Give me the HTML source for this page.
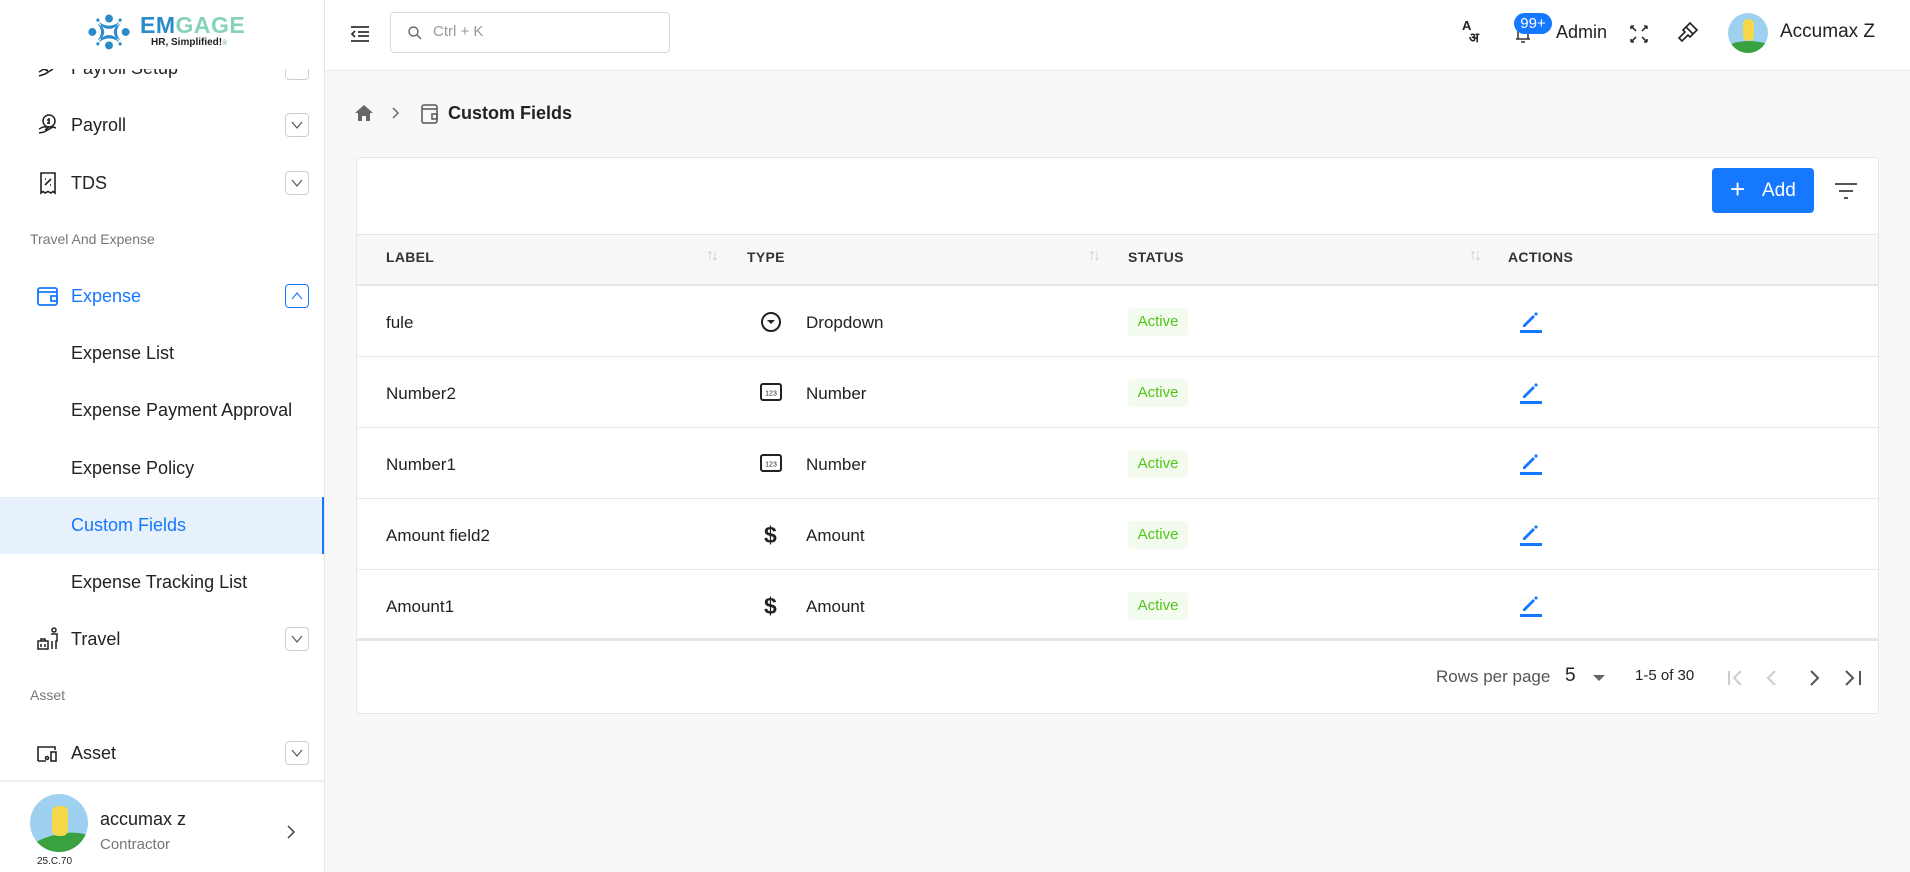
<!DOCTYPE html>
<html><head><meta charset="utf-8"><style>
*{box-sizing:border-box;margin:0;padding:0}
body{width:1910px;height:872px;overflow:hidden;font-family:"Liberation Sans",sans-serif;background:#f8f8f8;color:#222;position:relative}
.abs{position:absolute}
#side{left:0;top:0;width:325px;height:872px;background:#fff;border-right:1px solid #e6e6e6;overflow:hidden}
#hdr{left:325px;top:0;width:1585px;height:71px;background:#fff;border-bottom:1px solid #eaeaea}
.mi{position:absolute;left:0;width:325px;height:48px;display:flex;align-items:center;font-size:18px;color:#222}
.mi .ic{position:absolute;left:36px;top:12px;width:24px;height:24px}
.mi .t{position:absolute;left:71px}
.chev{position:absolute;left:285px;top:12px;width:24px;height:24px;border:1px solid #cfcfcf;border-radius:4px;display:flex;align-items:center;justify-content:center}
.sec{position:absolute;left:30px;font-size:14px;color:#777}
.card{left:356px;top:157px;width:1523px;height:557px;background:#fff;border:1px solid #e4e7ec;border-radius:4px}
.th{position:absolute;top:249px;font-size:14px;font-weight:bold;color:#333;letter-spacing:.3px}
.row{position:absolute;left:357px;width:1521px;height:71px;border-bottom:1px solid #e8e8e8;font-size:17px;color:#222}
.row span{position:absolute;top:27px}
.badge{position:absolute;left:771px;top:22px;width:60px;height:28px;background:#f3fbef;border-radius:4px;color:#52c41a;font-size:15px;text-align:center;line-height:28px}
</style></head><body>
<div id="side" class="abs">
  <div class="mi" style="top:44px"><svg class="ic" viewBox="0 0 24 24" fill="none" stroke="#222" stroke-width="1.6"><path d="M3 16l5-3 4 2M3 20l6-2 8-5M14 4l6 6M17 7l-6 6"/></svg><span class="t" style="top:14px">Payroll Setup</span><div class="chev"></div></div>
  <div class="abs" style="left:0;top:0;width:324px;height:69px;background:#fff"></div>
  <svg class="abs" style="left:86px;top:10px" width="46" height="44" viewBox="0 0 58 46">
    <g fill="#2a8bc9"><circle cx="29" cy="6" r="5"/><circle cx="29" cy="40" r="5"/><circle cx="8" cy="23" r="5"/><circle cx="50" cy="23" r="5"/>
    <path d="M16 10 Q29 20 42 10 L38 16 Q29 22 20 16Z"/><path d="M16 36 Q29 26 42 36 L38 30 Q29 24 20 30Z"/>
    <path d="M14 12 Q24 23 14 34 L20 30 Q26 23 20 16Z"/><path d="M44 12 Q34 23 44 34 L38 30 Q32 23 38 16Z"/>
    <circle cx="15" cy="8" r="2"/><circle cx="43" cy="8" r="2"/><circle cx="15" cy="38" r="2"/><circle cx="43" cy="38" r="2"/></g>
  </svg>
  <div class="abs" style="left:140px;top:13px;font-size:23px;font-weight:bold;letter-spacing:0.5px;line-height:24px"><span style="color:#2a8bc9">EM</span><span style="color:#86d3b9">GAGE</span></div>
  <div class="abs" style="left:151px;top:37px;font-size:10px;font-weight:bold;color:#222">HR, Simplified!<span style="color:#8bc;font-size:7px">®</span></div>

  <div class="mi" style="top:101px"><svg class="ic" viewBox="0 0 24 24" fill="none" stroke="#222" stroke-width="1.5"><circle cx="13" cy="8" r="6"/><path d="M13 5v6M11 7h3M11 10h3M3 16l4-2h6l-4 3M3 20l5-1 9-5 3 1"/></svg><span class="t">Payroll</span><div class="chev"><svg width="12" height="8" viewBox="0 0 12 8"><path d="M1 1l5 6 5-6" fill="none" stroke="#555" stroke-width="1.2"/></svg></div></div>
  <div class="mi" style="top:159px"><svg class="ic" viewBox="0 0 24 24" fill="none" stroke="#222" stroke-width="1.6"><path d="M5 2h14v20l-2-1.5-2 1.5-3-1.5-3 1.5-2-1.5-2 1.5z"/><path d="M9 14l6-6M9 8h1M14 14h1"/></svg><span class="t">TDS</span><div class="chev"><svg width="12" height="8" viewBox="0 0 12 8"><path d="M1 1l5 6 5-6" fill="none" stroke="#555" stroke-width="1.2"/></svg></div></div>
  <div class="sec" style="top:231px">Travel And Expense</div>
  <div class="mi" style="top:272px;color:#1677ff"><svg class="ic" viewBox="0 0 24 24" fill="none" stroke="#1677ff" stroke-width="1.8"><rect x="2" y="4" width="19" height="17" rx="2"/><path d="M2 8h19M15 12h6v5h-6z"/></svg><span class="t">Expense</span><div class="chev" style="border-color:#1677ff"><svg width="12" height="8" viewBox="0 0 12 8"><path d="M1 7l5-6 5 6" fill="none" stroke="#1677ff" stroke-width="1.2"/></svg></div></div>
  <div class="mi" style="top:329px"><span class="t">Expense List</span></div>
  <div class="mi" style="top:386px"><span class="t">Expense Payment Approval</span></div>
  <div class="mi" style="top:444px"><span class="t">Expense Policy</span></div>
  <div class="mi" style="top:497px;height:57px;background:#e6f1fc;color:#1677ff;border-right:3px solid #1677ff"><span class="t">Custom Fields</span></div>
  <div class="mi" style="top:558px"><span class="t">Expense Tracking List</span></div>
  <div class="mi" style="top:615px"><svg class="ic" viewBox="0 0 24 24" fill="none" stroke="#222" stroke-width="1.5"><circle cx="18" cy="3" r="2"/><path d="M15 7h6v7h-1v8M16 14v8M2 14h10v8H2zM5 14v-2h4v2M5 17v3M9 17v3"/></svg><span class="t">Travel</span><div class="chev"><svg width="12" height="8" viewBox="0 0 12 8"><path d="M1 1l5 6 5-6" fill="none" stroke="#555" stroke-width="1.2"/></svg></div></div>
  <div class="sec" style="top:687px">Asset</div>
  <div class="mi" style="top:729px"><svg class="ic" viewBox="0 0 24 24" fill="none" stroke="#222" stroke-width="1.6"><path d="M2 20V6h17v3M2 20h8"/><rect x="15" y="11" width="5" height="9"/><circle cx="11" cy="17" r="1.5"/></svg><span class="t">Asset</span><div class="chev"><svg width="12" height="8" viewBox="0 0 12 8"><path d="M1 1l5 6 5-6" fill="none" stroke="#555" stroke-width="1.2"/></svg></div></div>
  <div class="abs" style="left:0;top:780px;width:325px;height:2px;background:#eee"></div>
  <div class="abs" style="left:30px;top:794px;width:58px;height:58px;border-radius:50%;background:#9ed0f0;overflow:hidden"><div style="position:absolute;left:-5px;top:40px;width:70px;height:30px;background:#3aa140;border-radius:50% 50% 0 0;transform:rotate(-12deg)"></div><div style="position:absolute;left:22px;top:12px;width:16px;height:30px;background:#f5d74a;border-radius:6px"></div></div>
  <div class="abs" style="left:37px;top:856px;font-size:10px;color:#222">25.C.70</div>
  <div class="abs" style="left:100px;top:809px;font-size:18px;color:#222">accumax z</div>
  <div class="abs" style="left:100px;top:836px;font-size:15px;color:#777">Contractor</div>
  <svg class="abs" style="left:286px;top:824px" width="10" height="16" viewBox="0 0 10 16"><path d="M2 2l6 6-6 6" fill="none" stroke="#444" stroke-width="1.5"/></svg>
</div>

<div id="hdr" class="abs">
  <svg class="abs" style="left:25px;top:25px" width="20" height="18" viewBox="0 0 20 18" fill="none" stroke="#333" stroke-width="1.8"><path d="M1 2h18M8 7h11M8 11h11M1 16h18M5 6l-3 3 3 3"/></svg>
  <div class="abs" style="left:65px;top:12px;width:280px;height:41px;border:1px solid #d9d9d9;border-radius:4px"></div>
  <svg class="abs" style="left:83px;top:26px" width="14" height="14" viewBox="0 0 14 14" fill="none" stroke="#666" stroke-width="1.4"><circle cx="5.5" cy="5.5" r="4.5"/><path d="M9 9l4 4"/></svg>
  <div class="abs" style="left:108px;top:23px;font-size:15px;color:#999">Ctrl + K</div>
  <div class="abs" style="left:1137px;top:20px;font-size:13px;font-weight:bold;color:#222;line-height:12px">A<br><span style="margin-left:7px">अ</span></div>
  <svg class="abs" style="left:1190px;top:24px" width="16" height="20" viewBox="0 0 16 20" fill="none" stroke="#333" stroke-width="1.5"><path d="M3 15V8a5 5 0 0110 0v7zM1 15h14M6 18h4"/></svg>
  <div class="abs" style="left:1189px;top:13px;width:38px;height:21px;background:#1677ff;border-radius:11px;color:#fff;font-size:15px;text-align:center;line-height:21px">99+</div>
  <div class="abs" style="left:1231px;top:22px;font-size:18px;color:#222">Admin</div>
  <svg class="abs" style="left:1305px;top:25px" width="18" height="18" viewBox="0 0 18 18" fill="none" stroke="#333" stroke-width="1.6"><path d="M1 1l5 5M1 1v3M1 1h3M17 1l-5 5M17 1v3M17 1h-3M1 17l5-5M1 17v-3M1 17h3M17 17l-5-5M17 17v-3M17 17h-3"/></svg>
  <svg class="abs" style="left:1352px;top:21px" width="22" height="22" viewBox="0 0 22 22" fill="none" stroke="#222" stroke-width="1.6"><path d="M13 2l7 7-4 4-7-7zM9 6l-3 3 2 2-6 6 3 3 6-6 2 2 3-3"/></svg>
  <div class="abs" style="left:1403px;top:13px;width:40px;height:40px;border-radius:50%;background:#9ed0f0;overflow:hidden"><div style="position:absolute;left:-4px;top:28px;width:50px;height:20px;background:#3aa140;border-radius:50% 50% 0 0"></div><div style="position:absolute;left:15px;top:6px;width:11px;height:22px;background:#f5d74a;border-radius:5px"></div></div>
  <div class="abs" style="left:1455px;top:21px;font-size:19px;color:#222">Accumax Z</div>
</div>

<svg class="abs" style="left:354px;top:104px" width="20" height="18" viewBox="0 0 20 18"><path d="M10 1L1 9h3v8h4v-5h4v5h4V9h3z" fill="#666"/></svg>
<svg class="abs" style="left:392px;top:107px" width="8" height="12" viewBox="0 0 8 12"><path d="M1 1l5 5-5 5" fill="none" stroke="#666" stroke-width="1.5"/></svg>
<svg class="abs" style="left:420px;top:103px" width="20" height="22" viewBox="0 0 20 22" fill="none" stroke="#555" stroke-width="1.5"><rect x="2" y="2" width="15" height="18" rx="2"/><path d="M2 6h15M12 11h5v5h-5z"/></svg>
<div class="abs" style="left:448px;top:103px;font-size:18px;font-weight:bold;color:#222">Custom Fields</div>

<div class="card abs"></div>
<div class="abs" style="left:1712px;top:168px;width:102px;height:45px;background:#1677ff;border-radius:4px;color:#fff;font-size:19px;line-height:45px"><span style="position:absolute;left:18px;top:-1px;font-size:26px;font-weight:300">+</span><span style="position:absolute;left:50px">Add</span></div>
<svg class="abs" style="left:1835px;top:183px" width="22" height="16" viewBox="0 0 22 16" fill="none" stroke="#555" stroke-width="2"><path d="M0 1h22M4 8h14M9 15h4"/></svg>

<div class="abs" style="left:357px;top:234px;width:1521px;height:52px;background:#f8f8f8;border-top:1px solid #e8e8e8;border-bottom:2px solid #e4e4e4"></div>
<div class="th" style="left:386px">LABEL</div>
<div class="th" style="left:747px">TYPE</div>
<div class="th" style="left:1128px">STATUS</div>
<div class="th" style="left:1508px">ACTIONS</div>
<div class="abs" style="left:706px;top:247px;color:#ccc;font-size:16px;letter-spacing:-3px">↑↓</div>
<div class="abs" style="left:1088px;top:247px;color:#ccc;font-size:16px;letter-spacing:-3px">↑↓</div>
<div class="abs" style="left:1469px;top:247px;color:#ccc;font-size:16px;letter-spacing:-3px">↑↓</div>

<div class="row" style="top:286px"><span style="left:29px">fule</span>
<svg style="position:absolute;left:403px;top:25px" width="22" height="22" viewBox="0 0 22 22"><circle cx="11" cy="11" r="9" fill="none" stroke="#222" stroke-width="2"/><path d="M7 9h8l-4 4z" fill="#222"/></svg><span style="left:449px">Dropdown</span>
<div class="badge">Active</div>
<svg style="position:absolute;left:1162px;top:24px" width="24" height="24" viewBox="0 0 24 24"><path d="M4 15l10-10 2 2-10 10H4z" fill="#1677ff"/><path d="M15 4l2-2 2 2-2 2z" fill="#1677ff"/><rect x="1" y="20" width="22" height="3" fill="#1677ff"/></svg></div>
<div class="row" style="top:357px"><span style="left:29px">Number2</span>
<svg style="position:absolute;left:403px;top:26px" width="22" height="18" viewBox="0 0 22 18"><rect x="1" y="1" width="20" height="16" rx="2" fill="none" stroke="#222" stroke-width="2"/><text x="11" y="12.5" font-size="7" text-anchor="middle" font-family="Liberation Sans" fill="#222">123</text></svg><span style="left:449px">Number</span>
<div class="badge">Active</div>
<svg style="position:absolute;left:1162px;top:24px" width="24" height="24" viewBox="0 0 24 24"><path d="M4 15l10-10 2 2-10 10H4z" fill="#1677ff"/><path d="M15 4l2-2 2 2-2 2z" fill="#1677ff"/><rect x="1" y="20" width="22" height="3" fill="#1677ff"/></svg></div>
<div class="row" style="top:428px"><span style="left:29px">Number1</span>
<svg style="position:absolute;left:403px;top:26px" width="22" height="18" viewBox="0 0 22 18"><rect x="1" y="1" width="20" height="16" rx="2" fill="none" stroke="#222" stroke-width="2"/><text x="11" y="12.5" font-size="7" text-anchor="middle" font-family="Liberation Sans" fill="#222">123</text></svg><span style="left:449px">Number</span>
<div class="badge">Active</div>
<svg style="position:absolute;left:1162px;top:24px" width="24" height="24" viewBox="0 0 24 24"><path d="M4 15l10-10 2 2-10 10H4z" fill="#1677ff"/><path d="M15 4l2-2 2 2-2 2z" fill="#1677ff"/><rect x="1" y="20" width="22" height="3" fill="#1677ff"/></svg></div>
<div class="row" style="top:499px"><span style="left:29px">Amount field2</span>
<span style="left:407px;top:23px;font-size:23px;font-weight:bold">$</span><span style="left:449px">Amount</span>
<div class="badge">Active</div>
<svg style="position:absolute;left:1162px;top:24px" width="24" height="24" viewBox="0 0 24 24"><path d="M4 15l10-10 2 2-10 10H4z" fill="#1677ff"/><path d="M15 4l2-2 2 2-2 2z" fill="#1677ff"/><rect x="1" y="20" width="22" height="3" fill="#1677ff"/></svg></div>
<div class="row" style="top:570px;border-bottom:3px solid #e4e4e4"><span style="left:29px">Amount1</span>
<span style="left:407px;top:23px;font-size:23px;font-weight:bold">$</span><span style="left:449px">Amount</span>
<div class="badge">Active</div>
<svg style="position:absolute;left:1162px;top:24px" width="24" height="24" viewBox="0 0 24 24"><path d="M4 15l10-10 2 2-10 10H4z" fill="#1677ff"/><path d="M15 4l2-2 2 2-2 2z" fill="#1677ff"/><rect x="1" y="20" width="22" height="3" fill="#1677ff"/></svg></div>

<div class="abs" style="left:1436px;top:667px;font-size:17px;color:#555">Rows per page</div>
<div class="abs" style="left:1565px;top:665px;font-size:19px;color:#222">5</div>
<svg class="abs" style="left:1592px;top:674px" width="14" height="8" viewBox="0 0 14 8"><path d="M1 1h12L7 7z" fill="#666"/></svg>
<div class="abs" style="left:1635px;top:667px;font-size:15px;color:#222">1-5 of 30</div>
<svg class="abs" style="left:1727px;top:669px" width="160" height="18" viewBox="0 0 160 18" fill="none" stroke-width="2"><path d="M2 2v14M14 2l-7 7 7 7" stroke="#ccc"/><path d="M48 2l-7 7 7 7" stroke="#ccc"/><path d="M84 2l7 7-7 7" stroke="#555"/><path d="M119 2l7 7-7 7M133 2v14" stroke="#555"/></svg>
</body></html>
